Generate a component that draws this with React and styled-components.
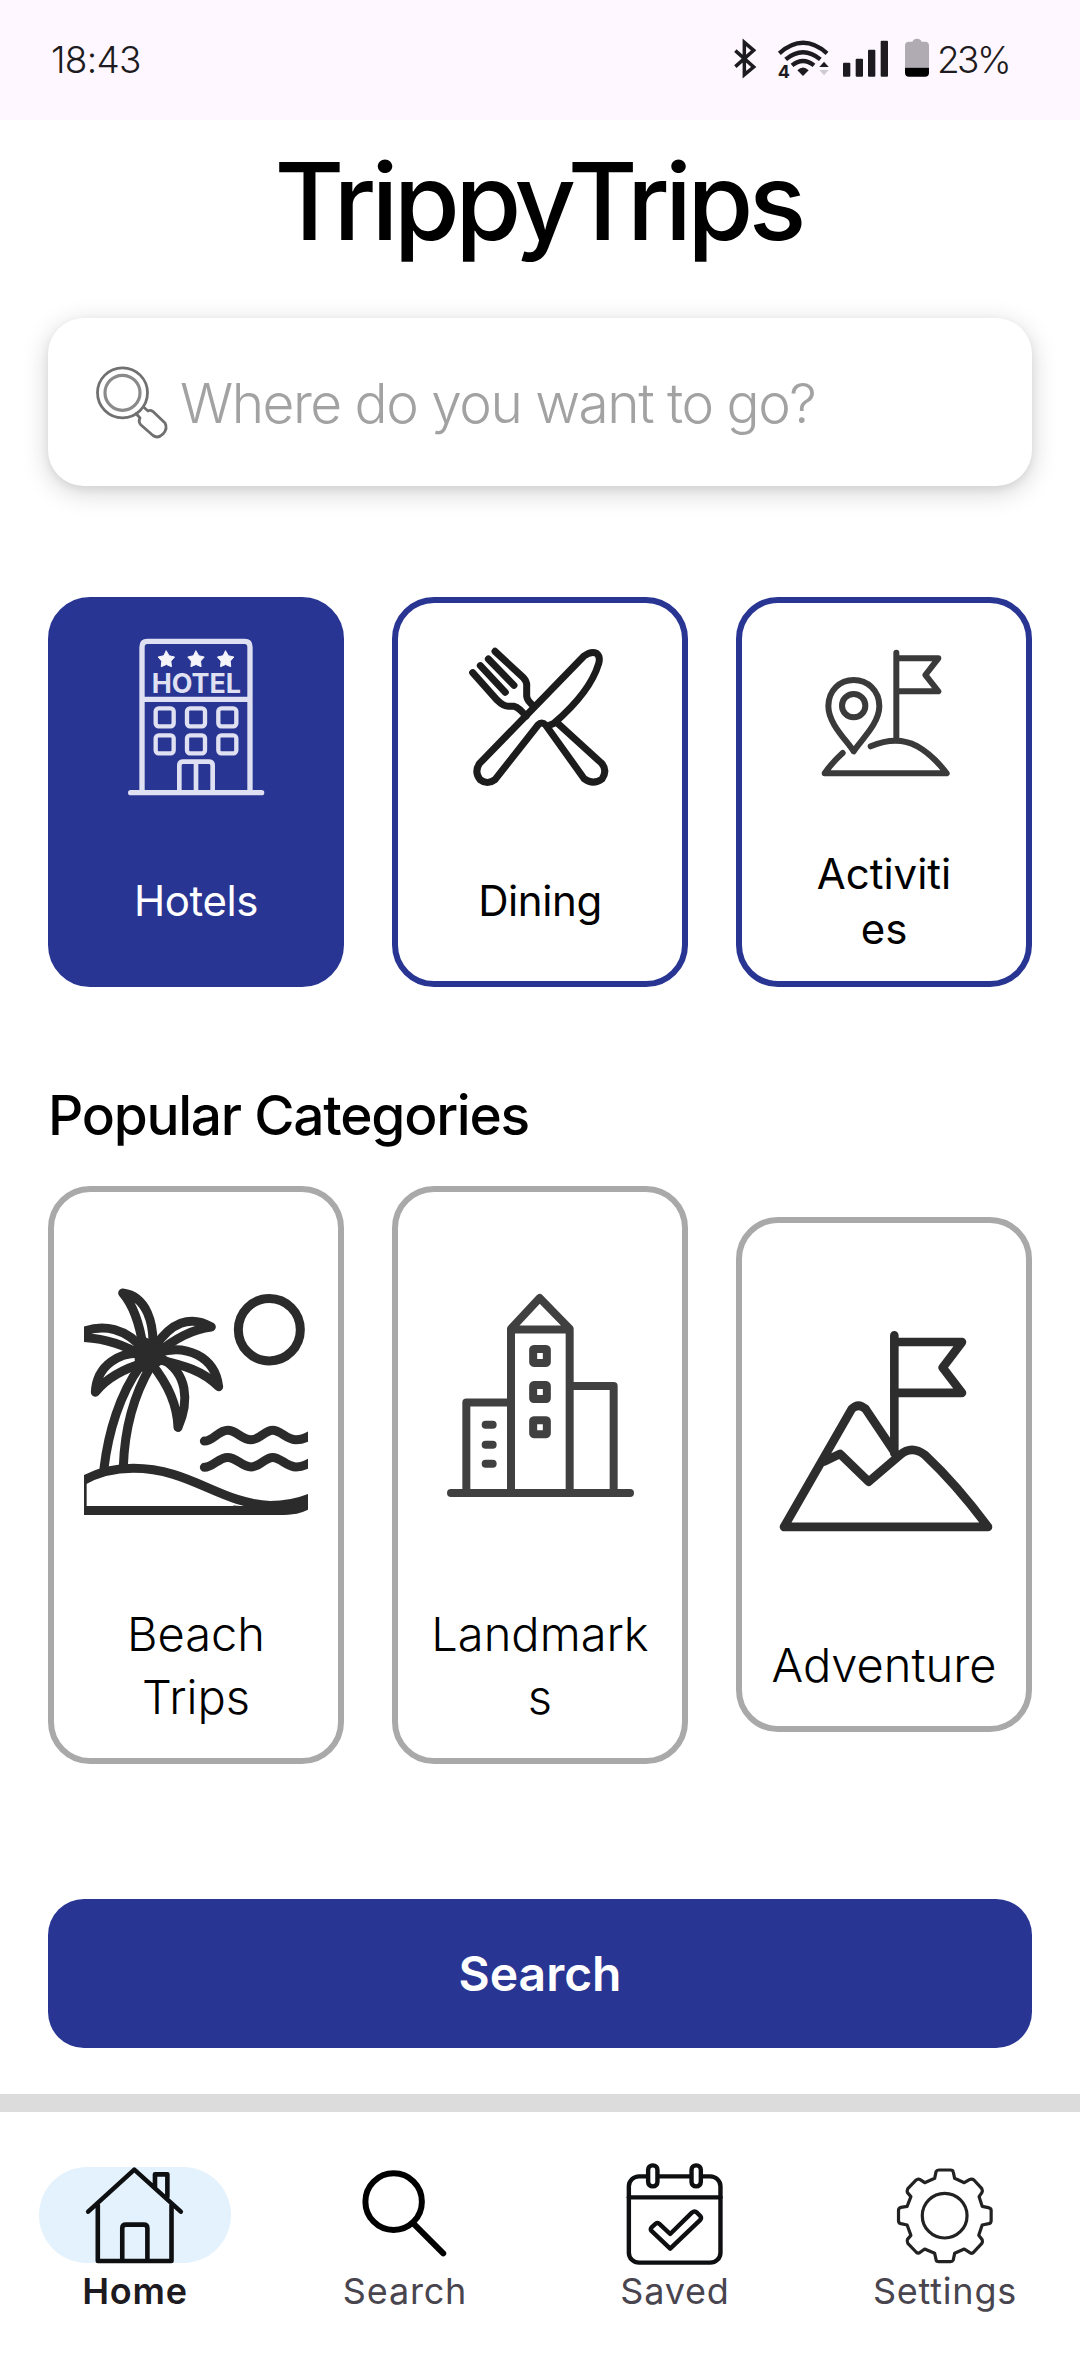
import React from "react";
import styled, { createGlobalStyle } from "styled-components";

const NAVY = "#283593";

const GlobalStyle = createGlobalStyle`
  * { box-sizing: border-box; }
  body { margin: 0; background: #fff; }
`;

const Screen = styled.div`
  display: flex;
  flex-direction: column;
  width: 1080px;
  height: 2376px;
  overflow: hidden;
  background: #fff;
  color: #000;
  font-family: Inter, Roboto, sans-serif;
`;

const StatusBar = styled.header`
  display: flex;
  align-items: center;
  justify-content: space-between;
  height: 120px;
  padding: 0 71px 2px 51px;
  background: #fef7ff;
  color: #1d1b20;
  font-size: 37px;
  font-weight: 300;
`;

const Clock = styled.span`
  letter-spacing: -0.7px;
`;

const StatusIcons = styled.div`
  display: flex;
  align-items: center;
`;

const Percent = styled.span`
  margin-left: 8px;
  letter-spacing: -2.6px;
`;

const StatusGlyph = styled.svg`
  overflow: visible;
  width: ${(p) => p.$w}px;
  height: 41.7px;
  margin-left: ${(p) => p.$gap || 0}px;
`;

const Title = styled.h1`
  margin: 28px 0 63px;
  padding-right: 4px;
  font-size: 107px;
  line-height: 107px;
  font-weight: 500;
  letter-spacing: -4.7px;
  text-align: center;
`;

const Content = styled.main`
  display: flex;
  flex-direction: column;
  padding: 0 48px;
`;

const SearchField = styled.div`
  display: flex;
  align-items: center;
  height: 168px;
  padding-left: 46px;
  border-radius: 36px;
  background: #fff;
  box-shadow: 0 6px 26px rgba(0, 0, 0, 0.18), 0 3px 8px rgba(0, 0, 0, 0.06);
`;

const Placeholder = styled.span`
  margin-left: 10px;
  padding-top: 2px;
  color: #a2a2a2;
  font-size: 55px;
  font-weight: 300;
  letter-spacing: -1.5px;
  white-space: nowrap;
`;

const CardRow = styled.div`
  display: flex;
  align-items: center;
  gap: 48px;
  margin-top: ${(p) => p.$top}px;
`;

const Card = styled.div`
  display: flex;
  flex: 1 1 0;
  min-width: 0;
  flex-direction: column;
  align-items: center;
  border-style: solid;
  border-width: 6px;
  border-radius: 42px;
`;

const ServiceCard = styled(Card)`
  height: 390px;
  border-color: ${NAVY};
  background: ${(p) => (p.$active ? NAVY : "#fff")};
  color: ${(p) => (p.$active ? "#fff" : "#000")};
`;

const CategoryCard = styled(Card)`
  padding: 10px 0 30px;
  border-color: #a9a9a9;

  &:last-child { margin-bottom: 1px; }
`;

const IconSlot = styled.div`
  display: flex;
  align-items: center;
  justify-content: center;
  height: ${(p) => p.$h}px;
`;

const ServiceLabel = styled.div`
  display: flex;
  align-items: center;
  justify-content: center;
  width: 180px;
  height: 142px;
  padding-top: 1px;
  font-size: 42px;
  line-height: 54.6px;
  font-weight: 400;
  text-align: center;
  letter-spacing: ${(p) => p.$ls}px;
`;

const CategoryLabel = styled.div`
  font-size: 47px;
  line-height: 63px;
  font-weight: 300;
  text-align: center;
`;

const Heading = styled.h2`
  margin: 95px 0 0;
  font-size: 55px;
  line-height: 66px;
  font-weight: 500;
  letter-spacing: -1.25px;
`;

const SearchButton = styled.button`
  height: 149px;
  margin: 135px 0 46px;
  border: 0;
  border-radius: 36px;
  background: ${NAVY};
  color: #fff;
  font-family: inherit;
  font-size: 48px;
  font-weight: 600;
`;

const NavBar = styled.nav`
  display: grid;
  grid-template-columns: repeat(4, 1fr);
  flex: 1;
  padding-top: 55px;
  border-top: 18px solid #dcdcdc;
`;

const NavItem = styled.a`
  display: flex;
  flex-direction: column;
  align-items: center;
  color: ${(p) => (p.$active ? "#1d1b20" : "#49454f")};
  font-size: 36px;
  line-height: 48px;
  font-weight: ${(p) => (p.$active ? 600 : 400)};
  letter-spacing: 0.8px;
`;

const Pill = styled.div`
  display: flex;
  align-items: center;
  justify-content: center;
  width: 192px;
  height: 96px;
  margin-bottom: 4px;
  border-radius: 48px;
  background: ${(p) => (p.$active ? "#e3f2fd" : "transparent")};
`;

const Drawing = styled.svg`
  flex: none;
  width: ${(p) => p.$w}px;
  height: ${(p) => p.$h}px;
  fill: none;
  stroke: ${(p) => p.$color};
  stroke-width: ${(p) => p.$stroke};
  stroke-linecap: round;
  stroke-linejoin: round;

  path, ellipse, rect { vector-effect: ${(p) => (p.$screen ? "non-scaling-stroke" : "none")}; }
  .solid { fill: ${(p) => p.$color}; stroke: none; }
`;

const NavDrawing = ({ x, stroke, color = "#0e0f11", children }) => (
  <Drawing $w={104} $h={104} $color={color} $stroke={stroke} $screen
    viewBox={`${x} 99 302 312`} preserveAspectRatio="none">{children}</Drawing>
);

const starPath = (cx, cy, r) =>
  "M" + Array.from({ length: 10 }, (_, i) => {
    const a = -Math.PI / 2 + (i * Math.PI) / 5;
    const d = i % 2 ? r * 0.55 : r;
    return `${(cx + d * Math.cos(a)).toFixed(1)} ${(cy + d * Math.sin(a)).toFixed(1)}`;
  }).join("L") + "Z";

const HotelIcon = () => (
  <Drawing $w={150} $h={163.3} $color="#dfe0f1" $stroke={16} viewBox="243 134 450 490">
    <path d="M306 605V170Q306 153 322 153H614Q630 153 630 170V605M272 607H665M306 327H630" />
    {[374, 468, 562].map((x) => [381, 462].map((y) => (
      <rect key={`${x}-${y}`} x={x - 27} y={y - 27} width="54" height="54" rx="9" strokeWidth="13" />
    )))}
    <path d="M418 600V525Q418 514 430 514H506Q518 514 518 525V600M468 514V600" strokeWidth="14" />
    {[379, 468, 557].map((x) => (
      <path key={x} d={starPath(x, 208, 26)} fill="#f4f4fa" stroke="#f4f4fa" strokeWidth="3" />
    ))}
    <text x="335" y="307" textLength="268" lengthAdjust="spacingAndGlyphs" fontSize="81"
      fontWeight="700" fill="#dfe0f1" stroke="none">HOTEL</text>
  </Drawing>
);

const DiningIcon = () => (
  <Drawing $w={150} $h={163.3} $color="#1c1c1c" $stroke={21} viewBox="255 134 450 490">
    <path d="M298 520L612 197Q634 181 650 189Q662 199 656 220C638 280 590 340 523 398M298 520Q282 545 300 568Q322 585 345 568L474 404Q485 392 497 404L613 566Q640 585 666 566Q684 540 664 518L530 396L510 404" />
    <path d="M345 183L430 262Q442 275 440 290V318Q442 332 460 346" />
    <path d="M325 206L402 285M301 226L376 306" />
    <path d="M278 247L352 330Q370 348 385 348H403Q418 352 438 378" />
  </Drawing>
);

const ActivitiesIcon = () => (
  <Drawing $w={150} $h={163.3} $color="#3a3a3a" $stroke={18} viewBox="267 134 450 490">
    <path d="M529 187V445M535 204H655L616 254L655 303H535" />
    <path d="M401 483C380 450 325 400 325 348C325 300 360 269 401 269C442 269 478 300 478 348C478 400 422 450 401 483Z" />
    <circle cx="401" cy="346" r="35" />
    <path d="M452 468C500 448 548 445 590 467C625 487 652 512 680 549H314Q335 518 368 488" />
  </Drawing>
);

const BeachIcon = () => (
  <Drawing $w={224} $h={228} $color="#2b2b2b" $stroke={9} $screen
    viewBox="162 482 672 503.4" preserveAspectRatio="none">
    <ellipse cx="718" cy="574" rx="93" ry="69" />
    <path d="M523 820C550 820 565 796 593 796C620 796 635 817 663 817C690 817 705 796 728 796C752 796 770 817 798 817Q820 817 842 807" />
    <path d="M523 878C550 878 565 856 593 856C620 856 635 877 663 877C690 877 705 856 728 856C752 856 770 877 798 877Q820 877 842 867" />
    <path d="M158 908C200 890 250 880 310 880C480 880 570 958 720 962Q785 962 842 945M158 973H760Q812 973 842 956" />
    <path className="solid" d="M162 900H170V975H162ZM610 962C700 968 780 960 834 942V965Q805 982 765 982H600Z" />
    <path d="M222 880C235 800 270 715 330 655M280 876C284 790 310 720 362 655" />
    <path d="M368 620C374 560 350 500 278 493C310 520 330 565 340 615" />
    <path d="M375 612C420 560 480 540 544 568C490 572 430 595 385 625" />
    <path d="M152 580C220 560 290 570 345 622M152 591C220 593 280 605 335 632" />
    <path d="M345 627C270 620 200 652 196 712C230 680 280 660 350 645" />
    <path d="M385 625C465 605 555 632 566 700C520 665 460 652 385 640" />
    <path d="M400 640C470 670 480 730 444 790C442 740 415 695 365 650" />
    <path className="solid" d="M312 612L345 590L372 600L400 612L405 645L375 662L330 668L315 650Z" />
  </Drawing>
);

const LandmarkIcon = () => (
  <Drawing $w={224} $h={228} $color="#404040" $stroke={8} $screen
    viewBox="144 303.4 672 586" preserveAspectRatio="none">
    <path d="M213 830H750M259 825V598H388M393 825V408L479 329L569 408V825M393 410H569M575 555H701V825" />
    {[478, 571, 661].map((y) => (
      <rect key={y} x="459.5" y={y - 18} width="41" height="36" rx="2" />
    ))}
    <path d="M317 655H338M317 706H338M317 755H338" />
  </Drawing>
);

const AdventureIcon = () => (
  <Drawing $w={224} $h={228} $color="#2d2d2d" $stroke={8.6} $screen
    viewBox="156 339.3 672 650" preserveAspectRatio="none">
    <path d="M523 386V722M528 405H726L668 478L726 550H528" />
    <path d="M523 718L437 596Q415 577 395 596L192 932H804C740 850 680 785 615 727Q575 698 540 727L446 803L360 724L312 746" />
  </Drawing>
);

const FieldIcon = () => (
  <Drawing $w={76} $h={78} $color="#707070" $stroke={2.8} viewBox="94 363 76 78">
    <circle cx="122.5" cy="392.8" r="25" />
    <circle cx="122.5" cy="392.8" r="17.5" stroke="#8a8a8a" strokeWidth="3.2" />
    <path d="M136 413.5L140 418Q138 422 141 425L153 435.5Q158 439 163 434Q168 428.500 165 423L153 411.500Q150 409.500 148 411L143.500 407" />
  </Drawing>
);

const services = [
  { name: "Hotels", Icon: HotelIcon, active: true, ls: -0.4 },
  { name: "Dining", Icon: DiningIcon, ls: -0.4 },
  { name: <>Activiti<br />es</>, Icon: ActivitiesIcon, ls: 0 },
];

const categories = [
  { name: <>Beach<br />Trips</>, Icon: BeachIcon },
  { name: <>Landmark<br />s</>, Icon: LandmarkIcon },
  { name: "Adventure", Icon: AdventureIcon },
];

export default function App() {
  return (
    <Screen>
      <GlobalStyle />
      <StatusBar>
        <Clock>18:43</Clock>
        <StatusIcons>
          <StatusGlyph $w={22} viewBox="100 55 66 125" fill="none" stroke="#1d1b20" strokeWidth="10.5">
            <path d="M104 93L159 142L131 165V68L159 92L104 141" />
          </StatusGlyph>
          <StatusGlyph $w={52.7} $gap={20.7} viewBox="228 55 158 125" fill="none" stroke="#1d1b20" strokeWidth="13">
            <path d="M235 101Q306 38 378 101M254 119Q306 76 358 119M273 137Q306 111 339 137" />
            <path d="M289 152Q306 135 323 152L306 169Z" fill="#1d1b20" stroke="none" />
            <path d="M355 142L369 126L383 142Z" fill="#1d1b20" stroke="none" />
            <path d="M355 151H383L369 167Z" fill="#cfc9d2" stroke="none" />
            <text x="230" y="174" fontSize="54" fontWeight="700" fill="#1d1b20" stroke="none">4</text>
          </StatusGlyph>
          <StatusGlyph $w={47} $gap={12.6} viewBox="424 55 141 125" fill="#1d1b20">
            <rect x="427" y="129" width="22" height="42" rx="3" />
            <rect x="465" y="117" width="22" height="54" rx="3" />
            <rect x="502" y="90" width="22" height="81" rx="3" />
            <rect x="540" y="63" width="22" height="108" rx="3" />
          </StatusGlyph>
          <StatusGlyph $w={24} $gap={15.7} viewBox="612 55 72 125">
            <path d="M612 144V78Q612 66 624 66H634Q638 57 648 57Q658 57 662 66H672Q684 66 684 78V144Z" fill="#b0abb2" />
            <path d="M612 144H684V159Q684 171 672 171H624Q612 171 612 159Z" fill="#000" />
          </StatusGlyph>
          <Percent>23%</Percent>
        </StatusIcons>
      </StatusBar>

      <Title>TrippyTrips</Title>

      <Content>
        <SearchField>
          <FieldIcon />
          <Placeholder>Where do you want to go?</Placeholder>
        </SearchField>

        <CardRow $top={111}>
          {services.map(({ name, Icon, active, ls }, i) => (
            <ServiceCard key={i} $active={active}>
              <IconSlot $h={227}><Icon /></IconSlot>
              <ServiceLabel $ls={ls}><span>{name}</span></ServiceLabel>
            </ServiceCard>
          ))}
        </CardRow>

        <Heading>Popular Categories</Heading>
        <CardRow $top={38}>
          {categories.map(({ name, Icon }, i) => (
            <CategoryCard key={i}>
              <IconSlot $h={400}><Icon /></IconSlot>
              <CategoryLabel>{name}</CategoryLabel>
            </CategoryCard>
          ))}
        </CardRow>

        <SearchButton>Search</SearchButton>
      </Content>

      <NavBar>
        <NavItem $active>
          <Pill $active>
            <NavDrawing x={241} stroke={4.6}>
              <path d="M256 245L390 119L525 245M284 225V393H498V225M355 390V295Q355 284 366 284H417Q428 284 428 295V390M450 172V133H486V200" />
            </NavDrawing>
          </Pill>
          Home
        </NavItem>
        <NavItem>
          <Pill>
            <NavDrawing x={1025} stroke={6} color="#000">
              <ellipse cx="1143" cy="215" rx="82" ry="85" />
              <path d="M1200 280L1287 370" />
            </NavDrawing>
          </Pill>
          Search
        </NavItem>
        <NavItem>
          <Pill>
            <NavDrawing x={241} stroke={4.4}>
              <rect x="258" y="139" width="266" height="259" rx="30" />
              <path d="M258 202H524" />
              <rect x="314" y="106" width="27" height="63" rx="13" fill="#fff" />
              <rect x="440" y="106" width="27" height="63" rx="13" fill="#fff" />
              <path d="M378 356L323 302Q320 297 324 292L336 281Q341 277 346 281L378 312L441 248Q449 241 456 248L466 259Q470 265 464 271Z" />
            </NavDrawing>
          </Pill>
          Saved
        </NavItem>
        <NavItem>
          <Pill>
            <NavDrawing x={1025} stroke={3.2} color="#222">
              <ellipse cx="1175" cy="257" rx="65" ry="67" />
              <path d="M1146 145L1150 125Q1152 120 1158 120H1192Q1199 120 1200 126L1204 145L1232 158L1247 149Q1254 145 1260 150L1283 176Q1286 182 1283 188L1275 200L1284 229L1302 233Q1310 235 1310 241V272Q1310 279 1303 281L1284 285L1274 316L1284 329Q1286 335 1283 340L1258 368Q1252 372 1247 367L1232 357L1204 370L1200 390Q1198 395 1192 395H1158Q1151 395 1150 389L1146 370L1117 357L1104 367Q1098 372 1092 366L1068 340Q1065 334 1067 328L1077 316L1066 285L1048 281Q1041 279 1041 272V241Q1041 234 1048 232L1066 229L1077 200L1067 188Q1065 182 1068 176L1091 151Q1098 145 1104 149L1117 158Z" />
            </NavDrawing>
          </Pill>
          Settings
        </NavItem>
      </NavBar>
    </Screen>
  );
}
